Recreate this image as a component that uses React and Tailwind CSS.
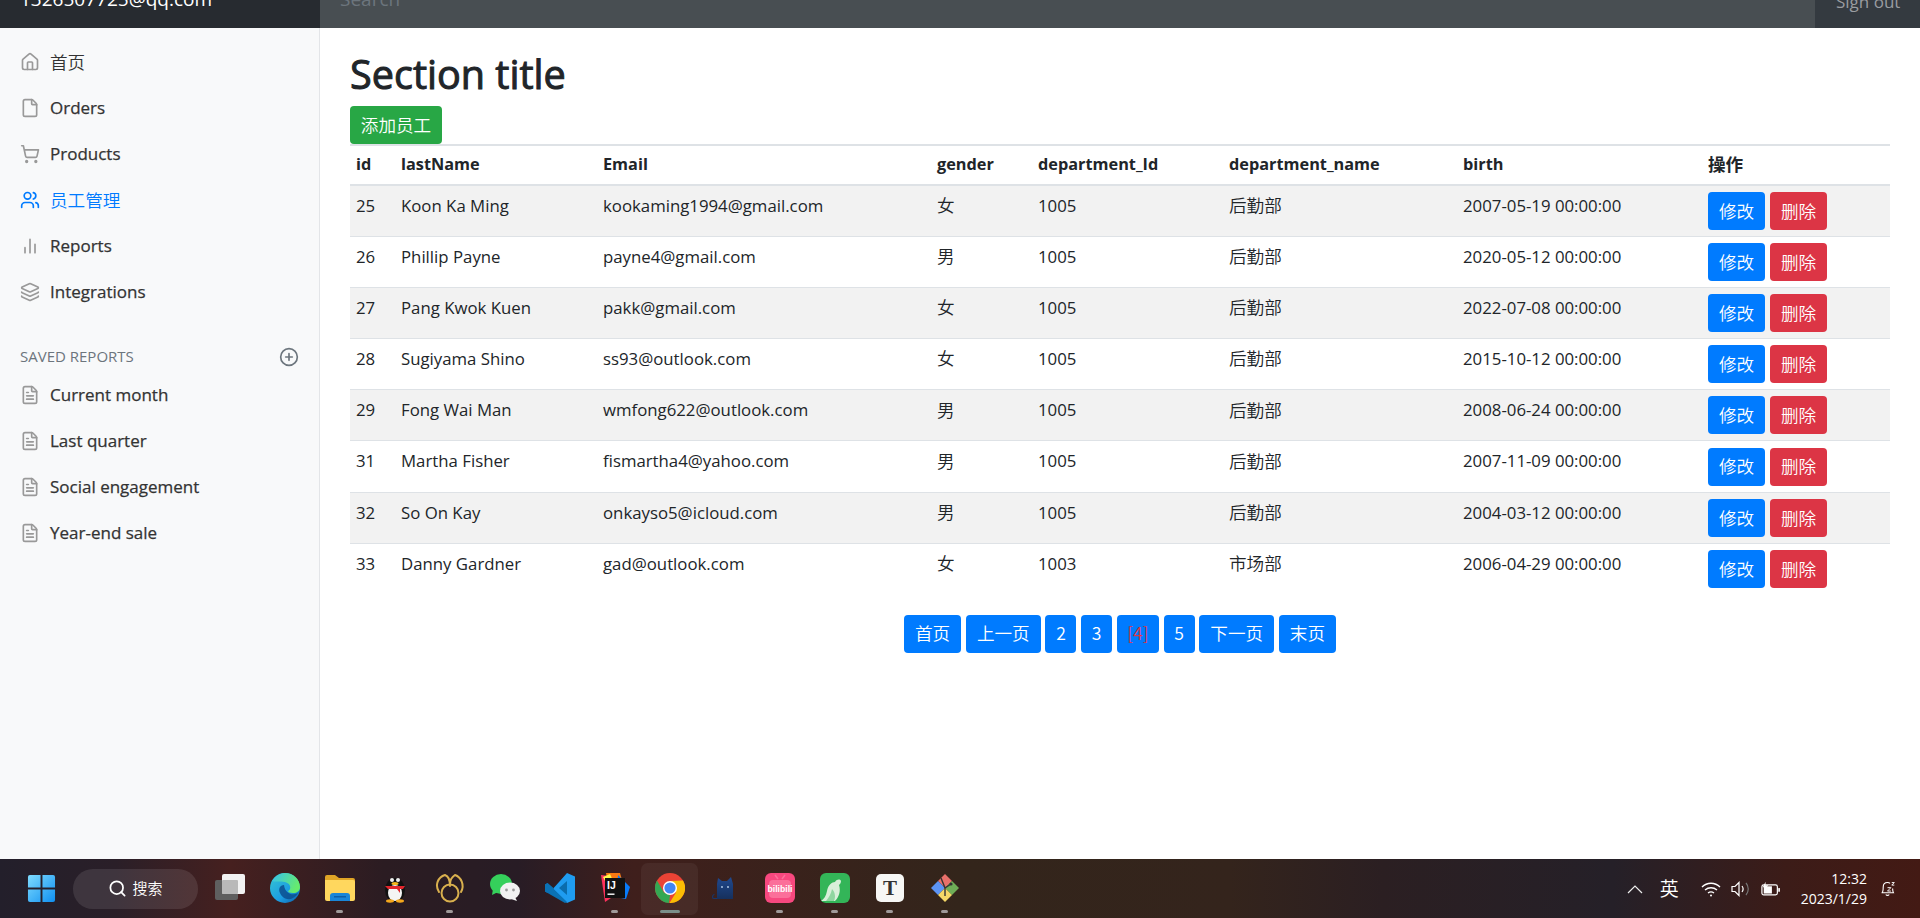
import { Home, File, ShoppingCart, Users, Layers, CirclePlus, FileText, Search } from "lucide-react";

const SANS = "font-['Segoe_UI','Open_Sans','Noto_Sans_CJK_SC',sans-serif]";
const CJK = "font-['Noto_Sans_CJK_SC',sans-serif] font-[350]";

const employees = [
  { id: 25, name: "Koon Ka Ming", email: "kookaming1994@gmail.com", gender: "女", deptId: 1005, dept: "后勤部", birth: "2007-05-19 00:00:00" },
  { id: 26, name: "Phillip Payne", email: "payne4@gmail.com", gender: "男", deptId: 1005, dept: "后勤部", birth: "2020-05-12 00:00:00" },
  { id: 27, name: "Pang Kwok Kuen", email: "pakk@gmail.com", gender: "女", deptId: 1005, dept: "后勤部", birth: "2022-07-08 00:00:00" },
  { id: 28, name: "Sugiyama Shino", email: "ss93@outlook.com", gender: "女", deptId: 1005, dept: "后勤部", birth: "2015-10-12 00:00:00" },
  { id: 29, name: "Fong Wai Man", email: "wmfong622@outlook.com", gender: "男", deptId: 1005, dept: "后勤部", birth: "2008-06-24 00:00:00" },
  { id: 31, name: "Martha Fisher", email: "fismartha4@yahoo.com", gender: "男", deptId: 1005, dept: "后勤部", birth: "2007-11-09 00:00:00" },
  { id: 32, name: "So On Kay", email: "onkayso5@icloud.com", gender: "男", deptId: 1005, dept: "后勤部", birth: "2004-03-12 00:00:00" },
  { id: 33, name: "Danny Gardner", email: "gad@outlook.com", gender: "女", deptId: 1003, dept: "市场部", birth: "2006-04-29 00:00:00" },
];

const pages = [
  { label: "首页", w: "w-[57px]" },
  { label: "上一页", w: "w-[75px]" },
  { label: "2", w: "w-[31px]" },
  { label: "3", w: "w-[31px]" },
  { label: "[4]", w: "w-[42px]", current: true },
  { label: "5", w: "w-[31px]" },
  { label: "下一页", w: "w-[75px]" },
  { label: "末页", w: "w-[57px]" },
];

function BarsIcon({ className }) {
  return (
    <svg viewBox="0 0 24 24" fill="none" stroke="currentColor" strokeWidth="2" strokeLinecap="round" className={className}>
      <path d="M18 20V10M12 20V4M6 20v-6" />
    </svg>
  );
}

function NavItem({ icon: Icon, label, active, cjk }) {
  return (
    <a
      className={
        "flex h-[46px] items-center pl-[20px] " +
        (cjk ? "text-[17.6px] " + CJK + " " : "text-[17px] [-webkit-text-stroke:0.25px] ") +
        (active ? "text-[#007bff]" : "text-[#333]")
      }
    >
      <Icon className={"mr-[10px] size-[20px] " + (active ? "text-[#007bff]" : "text-[#999]")} strokeWidth={2} />
      {label}
    </a>
  );
}

function Sidebar() {
  return (
    <aside className="flex w-[320px] shrink-0 flex-col border-r border-[#e3e5e8] bg-[#f8f9fa] pt-[11px]">
      <NavItem icon={Home} label="首页" cjk />
      <NavItem icon={File} label="Orders" />
      <NavItem icon={ShoppingCart} label="Products" />
      <NavItem icon={Users} label="员工管理" active cjk />
      <NavItem icon={BarsIcon} label="Reports" />
      <NavItem icon={Layers} label="Integrations" />
      <div className="mb-[-8px] mt-[18.500px] flex h-[46px] items-center justify-between pl-[20px] pr-[20px] text-[15px] uppercase text-[#6c757d]">
        <span>Saved reports</span>
        <CirclePlus className="size-[20px]" strokeWidth={2} />
      </div>
      <NavItem icon={FileText} label="Current month" />
      <NavItem icon={FileText} label="Last quarter" />
      <NavItem icon={FileText} label="Social engagement" />
      <NavItem icon={FileText} label="Year-end sale" />
    </aside>
  );
}

function EmployeeTable() {
  const head = ["id", "lastName", "Email", "gender", "department_Id", "department_name", "birth", "操作"];
  const widths = ["w-[45px]", "w-[202px]", "w-[334px]", "w-[101px]", "w-[191px]", "w-[234px]", "w-[245px]", "w-[188px]"];
  const cell = "border-t border-[#dee2e6] px-[6px] pb-[11px]";
  return (
    <table className="w-[1540px] table-fixed border-collapse text-[16.8px] text-[#212529]">
      <thead>
        <tr>
          {head.map((h, i) => (
            <th key={h} className={widths[i] + " h-[40px] border-y-2 border-[#dee2e6] px-[6px] pb-[2px] text-left font-bold " + (i === 7 ? "text-[17.6px]" : "text-[16.300px]")}>
              {h}
            </th>
          ))}
        </tr>
      </thead>
      <tbody>
        {employees.map((e, i) => (
          <tr key={e.id} className={i % 2 === 0 ? "bg-[#f2f2f2]" : "bg-white"}>
            <td className={cell + " h-[51.200px]"}>{e.id}</td>
            <td className={cell}>{e.name}</td>
            <td className={cell}>{e.email}</td>
            <td className={cell + " text-[17.6px] " + CJK}>{e.gender}</td>
            <td className={cell}>{e.deptId}</td>
            <td className={cell + " text-[17.6px] " + CJK}>{e.dept}</td>
            <td className={cell}>{e.birth}</td>
            <td className="border-t border-[#dee2e6] px-[6px] py-0">
              <div className="flex gap-[5px]">
                <button className={"h-[38px] w-[57px] rounded-[4px] bg-[#007bff] text-[17.6px] text-white " + CJK}>修改</button>
                <button className={"h-[38px] w-[57px] rounded-[4px] bg-[#dc3545] text-[17.6px] text-white " + CJK}>删除</button>
              </div>
            </td>
          </tr>
        ))}
      </tbody>
    </table>
  );
}

function Pagination() {
  return (
    <div className="mt-[20px] flex justify-center gap-[4.7px]">
      {pages.map((p) => (
        <button
          key={p.label}
          className={p.w + " h-[38px] rounded-[4px] bg-[#007bff] text-[17.6px] " + CJK + " " + (p.current ? "text-[#dc3545]" : "text-white")}
        >
          {p.label}
        </button>
      ))}
    </div>
  );
}

function WindowsLogo() {
  return (
    <svg viewBox="0 0 30 30" className="size-[29px]">
      <defs>
        <linearGradient id="win" x1="0" y1="0" x2="1" y2="1">
          <stop offset="0" stopColor="#7fdcff" />
          <stop offset="1" stopColor="#0f8ff0" />
        </linearGradient>
      </defs>
      <path fill="url(#win)" d="M1 3a2 2 0 0 1 2-2h11v13H1zM16 1h11a2 2 0 0 1 2 2v11H16zM1 16h13v13H3a2 2 0 0 1-2-2zM16 16h13v11a2 2 0 0 1-2 2H16z" />
    </svg>
  );
}

function TaskView() {
  return (
    <svg viewBox="0 0 30 30" className="size-[30px]">
      <rect x="0" y="7" width="23" height="20" rx="2" fill="#5f5f5f" />
      <rect x="7" y="1" width="23" height="20" rx="2" fill="#f2f2f2" />
      <rect x="7" y="7" width="16" height="14" rx="1" fill="#b9b9b9" />
    </svg>
  );
}

function Edge() {
  return (
    <svg viewBox="0 0 30 30" className="size-[30px]">
      <defs>
        <linearGradient id="edgeA" x1="0" y1="0" x2="1" y2="1">
          <stop offset="0" stopColor="#37c6d0" />
          <stop offset="0.6" stopColor="#1b9de2" />
          <stop offset="1" stopColor="#0c59a4" />
        </linearGradient>
        <linearGradient id="edgeB" x1="0" y1="0" x2="1" y2="0.4">
          <stop offset="0" stopColor="#35c1f1" />
          <stop offset="1" stopColor="#66eb6e" />
        </linearGradient>
      </defs>
      <circle cx="15" cy="15" r="15" fill="url(#edgeA)" />
      <path fill="url(#edgeB)" d="M2 8C6 1 13 0 15 0c8 0 15 6 15 14 0 4-3 6-7 6-3 0-5-1-5-2 3-1 4-7-3-9C10 8 4 9 2 8z" />
      <path fill="#0c4f8f" d="M14 12c-4 0-6 4-4 8 2 5 8 8 13 5 2-1 4-3 5-5-5 3-13 1-14-8z" opacity="0.85" />
    </svg>
  );
}

function Folder() {
  return (
    <svg viewBox="0 0 30 30" className="size-[30px]">
      <path fill="#e0a526" d="M0 4a2 2 0 0 1 2-2h8l4 3h14a2 2 0 0 1 2 2v5H0z" />
      <path fill="#ffd75e" d="M0 7h28a2 2 0 0 1 2 2v17a2 2 0 0 1-2 2H2a2 2 0 0 1-2-2z" />
      <path fill="#1a86d8" d="M5 23a3 3 0 0 1 3-3h14a3 3 0 0 1 3 3v5H5z" />
      <rect x="9" y="23" width="12" height="1.5" fill="#0d5fa8" />
    </svg>
  );
}

function QQ() {
  return (
    <svg viewBox="0 0 30 30" className="size-[30px]">
      <ellipse cx="15" cy="17" rx="10" ry="12" fill="#111" />
      <ellipse cx="15" cy="20" rx="7" ry="8" fill="#f4f4f4" />
      <circle cx="12" cy="7" r="2" fill="#eee" />
      <circle cx="18" cy="7" r="2" fill="#eee" />
      <ellipse cx="15" cy="10.5" rx="3.5" ry="1.6" fill="#f5b81c" />
      <path d="M5 13h20l-2 3-3 0 0 4-3-4H8z" fill="#e0252c" />
      <ellipse cx="10" cy="28" rx="4" ry="1.7" fill="#f5a81c" />
      <ellipse cx="20" cy="28" rx="4" ry="1.7" fill="#f5a81c" />
    </svg>
  );
}

function Navicat() {
  return (
    <svg viewBox="0 0 30 30" className="size-[30px]" fill="none" stroke="#d9b04e" strokeWidth="2" strokeLinecap="round">
      <path d="M4 19C-0.500 12 3 4 10 2c3 1 5 5 5 11" />
      <path d="M15 11c0-3 2-7 5-9 6 2 10 10 6 17" />
      <circle cx="15" cy="20" r="8.500" />
    </svg>
  );
}

function WeChat() {
  return (
    <svg viewBox="0 0 30 30" className="size-[30px]">
      <ellipse cx="11" cy="11" rx="11" ry="10" fill="#35d05b" />
      <path d="M3 16l-1 6 6-3z" fill="#35d05b" />
      <ellipse cx="20" cy="18" rx="10" ry="8.5" fill="#f2f2f2" />
      <path d="M25 24l2 4-6-2z" fill="#f2f2f2" />
      <circle cx="16.5" cy="17" r="1.4" fill="#9a9a9a" />
      <circle cx="23.5" cy="17" r="1.4" fill="#9a9a9a" />
    </svg>
  );
}

function VSCode() {
  return (
    <svg viewBox="0 0 30 30" className="size-[30px]">
      <path fill="#0a72b5" d="M22 1 8.5 15 2.5 10 0 11.5v7L2.5 20l6-5L22 29z" opacity="0.95" />
      <path fill="#1f9cf0" d="M22 0l8 3.5v23L22 30l-14-14zM22 8l-8 7 8 7z" />
      <path fill="#0a72b5" d="M0 11.5 2.5 10l19.5 19-2 1L0 18.5z" />
    </svg>
  );
}

function IntelliJ() {
  return (
    <svg viewBox="0 0 30 30" className="size-[30px]">
      <path fill="#fe315d" d="M1 2l9 1 4 20-9 6z" />
      <path fill="#f97a12" d="M6 0h14l2 7-14 3z" />
      <path fill="#087cfa" d="M18 2l12 12-4 12-10-2z" />
      <path fill="#fcf84a" d="M3 4l7-3 3 7-6 4z" />
      <rect x="5" y="5" width="20" height="20" fill="#111" />
      <text x="7" y="16" fontSize="10.5" fontWeight="700" fill="#fff" fontFamily="'Liberation Sans',sans-serif">IJ</text>
      <rect x="7.5" y="20.5" width="7" height="1.4" fill="#fff" />
    </svg>
  );
}

function Chrome() {
  return (
    <svg viewBox="0 0 30 30" className="size-[30px]">
      <circle cx="15" cy="15" r="15" fill="#ea4335" />
      <path fill="#34a853" d="M2 7.500 9 19.500l6 2.500-1 8A15 15 0 0 1 2 7.500z" />
      <path fill="#fbbc04" d="M28 7.500A15 15 0 0 1 14.500 30L21 19.500 15 8z" />
      <circle cx="15" cy="15" r="7" fill="#fff" />
      <circle cx="15" cy="15" r="5.6" fill="#4285f4" />
    </svg>
  );
}

function Cat() {
  return (
    <svg viewBox="0 0 30 30" className="size-[30px]">
      <defs>
        <linearGradient id="cat" x1="0" y1="0" x2="0" y2="1">
          <stop offset="0" stopColor="#20498f" />
          <stop offset="1" stopColor="#16305c" />
        </linearGradient>
      </defs>
      <path fill="url(#cat)" d="M7 11l1-6 4 3h5l4-4 2 7v15H7z" />
      <path fill="none" stroke="#1a3566" strokeWidth="1.200" strokeLinecap="round" d="M7 25.500H4c-2 0-2-3 0-4" />
      <circle cx="12" cy="14" r="0.9" fill="#bcd3ee" />
      <circle cx="18" cy="14" r="0.9" fill="#bcd3ee" />
    </svg>
  );
}

function Bili() {
  return (
    <svg viewBox="0 0 30 30" className="size-[30px]">
      <rect width="30" height="30" rx="6" fill="#f7487f" />
      <rect x="4" y="7" width="22" height="18" rx="4" fill="#fb6f9a" />
      <path stroke="#fb6f9a" strokeWidth="1.500" fill="none" d="M10 2l3 4M20 2l-3 4" />
      <text x="15" y="19" textAnchor="middle" fontSize="9" fontWeight="700" fill="#fff" fontFamily="'Liberation Sans',sans-serif" textLength="25" lengthAdjust="spacingAndGlyphs">bilibili</text>
    </svg>
  );
}

function Bird() {
  return (
    <svg viewBox="0 0 30 30" className="size-[30px]">
      <rect width="30" height="30" rx="6" fill="#33b558" />
      <path fill="#d8efd9" d="M1 28c3-2 5-5 6-10 1-6 5-9 8-9 2-3 5-3 6-1 0 2-1 3-2 4 2 6 0 12-4 16z" />
      <path fill="#8fd6a0" d="M12 16c-1 5-3 8-6 12h8c2-4 1-9-2-12z" />
    </svg>
  );
}

function Typora() {
  return (
    <svg viewBox="0 0 30 30" className="size-[30px]">
      <rect x="1" y="1" width="28" height="28" rx="5" fill="#f7f7f5" />
      <text x="15" y="22" textAnchor="middle" fontSize="21" fontWeight="700" fill="#333" fontFamily="'Liberation Serif',serif">T</text>
    </svg>
  );
}

function GitTool() {
  return (
    <svg viewBox="0 0 30 30" className="size-[30px]">
      <path fill="#e8706a" d="M15 1l7 7-7 7-7-7z" />
      <path fill="#5c94f5" d="M8 8l7 7-7 7-7-7z" />
      <path fill="#6fae57" d="M22 8l7 7-7 7-7-7z" />
      <path fill="#f4d767" d="M15 15l7 7-7 7-7-7z" />
      <path stroke="#333" strokeWidth="1.4" fill="none" d="M11 5l4 10v8M15 15l6-4" />
      <circle cx="21" cy="11" r="1.6" fill="#333" />
    </svg>
  );
}

function TaskSlot({ children, open, active }) {
  return (
    <div className={"relative flex h-[50px] w-[55px] items-center justify-center rounded-[6px] " + (active ? "bg-white/5 ring-1 ring-white/5" : "")}>
      <div className="-mt-[2px] flex">{children}</div>
      {open && <span className="absolute bottom-[1px] h-[3px] w-[7px] rounded-full bg-[#a09a9a]" />}
      {active && <span className="absolute bottom-[1px] h-[3px] w-[20px] rounded-full bg-[#7b8f8a]" />}
    </div>
  );
}

function Taskbar() {
  return (
    <footer className="flex h-[59px] shrink-0 items-center bg-[linear-gradient(90deg,#231f2b_0%,#2a1f28_6%,#46201f_12%,#2b1c22_20%,#281c25_27%,#3f1f1c_33%,#33251b_50%,#34241c_64%,#2b1f22_72%,#252028_84%,#3c1c18_93%,#431a14_100%)] text-white">
      <div className="ml-[27px] flex w-[46px]">
        <WindowsLogo />
      </div>
      <div className={"flex h-[40px] w-[125px] items-center justify-center gap-[5px] rounded-full bg-white/10 text-[15px] " + CJK}>
        <Search className="size-[19px]" strokeWidth={2.2} />
        <span>搜索</span>
      </div>
      <div className="ml-[4px] flex items-center">
        <TaskSlot><TaskView /></TaskSlot>
        <TaskSlot><Edge /></TaskSlot>
        <TaskSlot open><Folder /></TaskSlot>
        <TaskSlot><QQ /></TaskSlot>
        <TaskSlot open><Navicat /></TaskSlot>
        <TaskSlot><WeChat /></TaskSlot>
        <TaskSlot><VSCode /></TaskSlot>
        <TaskSlot open><IntelliJ /></TaskSlot>
        <TaskSlot active><Chrome /></TaskSlot>
        <TaskSlot><Cat /></TaskSlot>
        <TaskSlot open><Bili /></TaskSlot>
        <TaskSlot open><Bird /></TaskSlot>
        <TaskSlot open><Typora /></TaskSlot>
        <TaskSlot open><GitTool /></TaskSlot>
      </div>
      <div className="ml-auto flex items-center pr-[24px]">
        <svg viewBox="0 0 16 10" className="mr-[17px] h-[10px] w-[16px]" fill="none" stroke="#eee" strokeWidth="1.2"><path d="M1 9l7-7 7 7" /></svg>
        <span className={"mr-[22px] text-[19px] " + CJK}>英</span>
        <svg viewBox="0 0 20 16" className="mr-[10px] h-[16px] w-[20px]" fill="none" stroke="#fff" strokeWidth="1.4">
          <path d="M1 6c5-5 13-5 18 0M4 9c3.500-3 8.500-3 12 0M7 12c2-1.500 4-1.500 6 0" />
          <circle cx="10" cy="14.500" r="1" fill="#fff" stroke="none" />
        </svg>
        <svg viewBox="0 0 20 16" className="mr-[10px] h-[18px] w-[20px]" fill="none" stroke="#fff" strokeWidth="1.2">
          <path d="M1 5.500h3l4-4v13l-4-4H1z" />
          <path d="M11 5c1.500 2 1.500 4 0 6" />
          <path d="M15 2c3 3.500 3 8.500 0 12" stroke="#777" />
        </svg>
        <svg viewBox="0 0 22 16" className="mr-[20px] h-[18px] w-[20px]">
          <rect x="1" y="3.500" width="17" height="11" rx="2" fill="none" stroke="#fff" strokeWidth="1.3" />
          <path d="M3 5h9v8H3z" fill="#fff" />
          <rect x="19" y="7" width="1.800" height="4" fill="#fff" />
          <path d="M5 0 2 6h3l-1 3 4-5H5z" fill="#fff" />
        </svg>
        <div className="mr-[12px] flex flex-col items-end text-[14px] leading-[20px]">
          <span>12:32</span>
          <span>2023/1/29</span>
        </div>
        <svg viewBox="0 0 20 20" className="size-[17px]" fill="none" stroke="#fff" strokeWidth="1.3">
          <path d="M4 15c1-2 1-4 1-7 0-3 2-5 5-5 1 0 2 0 3 1M16 10c0 2 0 3 1 5H3M8 17c1 1.500 3 1.500 4 0" />
          <path d="M10 9h4l-4 4h4M15 3h3l-3 3h3" strokeWidth="1.100" />
        </svg>
      </div>
    </footer>
  );
}

export default function App() {
  return (
    <div className={"flex h-[918px] flex-col overflow-hidden bg-white " + SANS}>
      <header className="flex h-[28px] shrink-0 items-end overflow-hidden bg-[#343a40] text-white">
        <div className="flex h-[28px] w-[320px] items-end bg-[#272b30] pb-[14px] pl-[20px] text-[19px] leading-[30px]">1326507725@qq.com</div>
        <div className="flex h-[28px] flex-1 items-end bg-[#484e52] pb-[14px] pl-[20px] text-[19px] leading-[30px] text-[#6c757d]">Search</div>
        <div className="flex h-[28px] w-[105px] items-end pb-[14px] pl-[21px] text-[17px] leading-[24px] text-[#9a9da0]">Sign out</div>
      </header>
      <div className="flex min-h-0 flex-1">
        <Sidebar />
        <main className="flex-1 pl-[30px] pr-[30px] pt-[22px]">
          <h2 className="text-[39.6px] leading-[48px] text-[#212529] [-webkit-text-stroke:1px]">Section title</h2>
          <button className={"mb-0 mt-[8px] block h-[38px] w-[92px] rounded-[4px] bg-[#28a745] text-[17.6px] text-white " + CJK}>添加员工</button>
          <EmployeeTable />
          <Pagination />
        </main>
      </div>
      <Taskbar />
    </div>
  );
}
